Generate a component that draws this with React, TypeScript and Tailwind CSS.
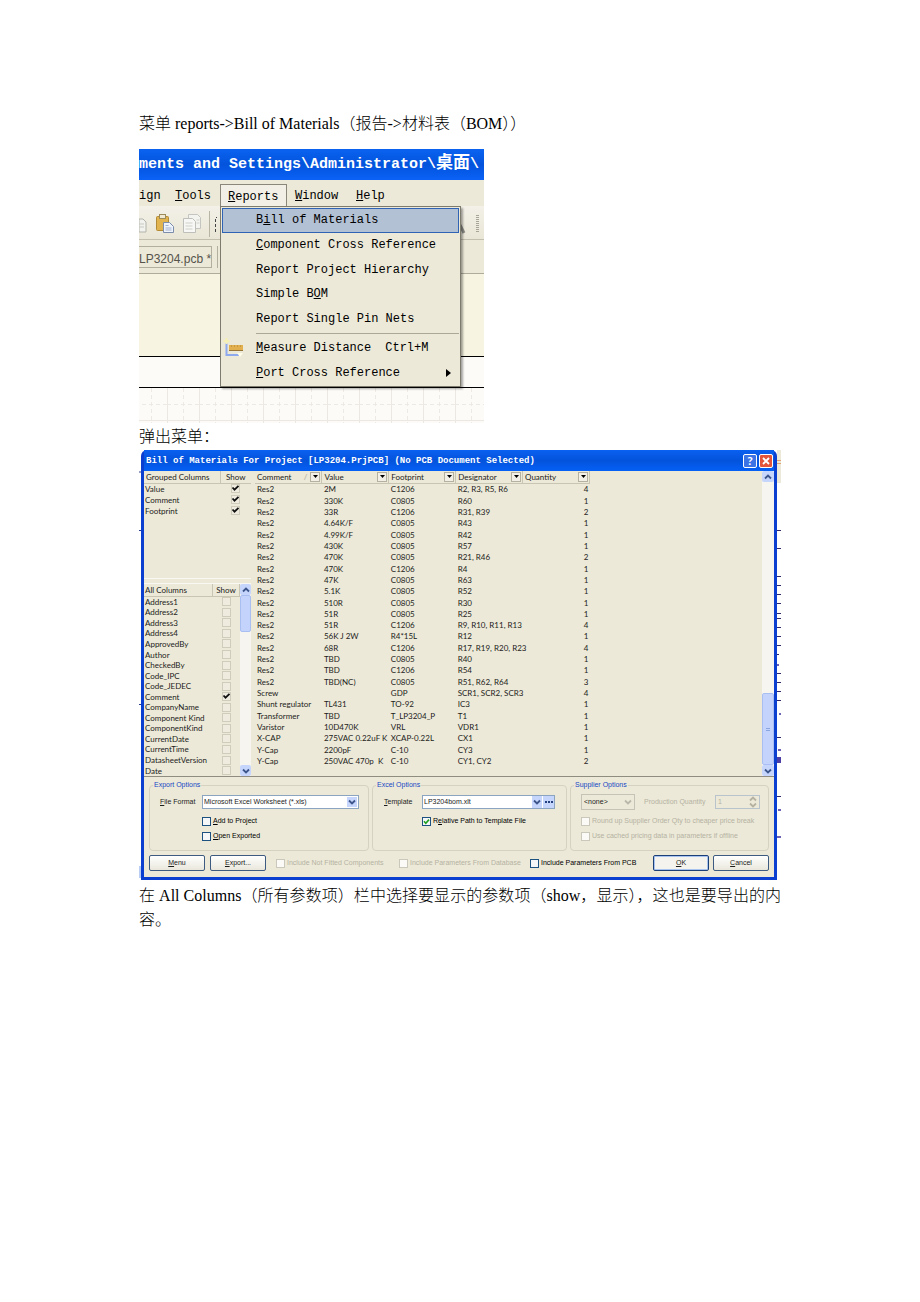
import { useState } from "react";
import type { ReactNode } from "react";

const rows = [
  ["Res2", "2M", "C1206", "R2, R3, R5, R6", 4],
  ["Res2", "330K", "C0805", "R60", 1],
  ["Res2", "33R", "C1206", "R31, R39", 2],
  ["Res2", "4.64K/F", "C0805", "R43", 1],
  ["Res2", "4.99K/F", "C0805", "R42", 1],
  ["Res2", "430K", "C0805", "R57", 1],
  ["Res2", "470K", "C0805", "R21, R46", 2],
  ["Res2", "470K", "C1206", "R4", 1],
  ["Res2", "47K", "C0805", "R63", 1],
  ["Res2", "5.1K", "C0805", "R52", 1],
  ["Res2", "510R", "C0805", "R30", 1],
  ["Res2", "51R", "C0805", "R25", 1],
  ["Res2", "51R", "C1206", "R9, R10, R11, R13", 4],
  ["Res2", "56K J 2W", "R4*15L", "R12", 1],
  ["Res2", "68R", "C1206", "R17, R19, R20, R23", 4],
  ["Res2", "TBD", "C0805", "R40", 1],
  ["Res2", "TBD", "C1206", "R54", 1],
  ["Res2", "TBD(NC)", "C0805", "R51, R62, R64", 3],
  ["Screw", "", "GDP", "SCR1, SCR2, SCR3", 4],
  ["Shunt regulator", "TL431", "TO-92", "IC3", 1],
  ["Transformer", "TBD", "T_LP3204_P", "T1", 1],
  ["Varistor", "10D470K", "VRL", "VDR1", 1],
  ["X-CAP", "275VAC 0.22uF K", "XCAP-0.22L", "CX1", 1],
  ["Y-Cap", "2200pF", "C-10", "CY3", 1],
  ["Y-Cap", "250VAC 470p  K", "C-10", "CY1, CY2", 2],
];

const headers = ["Comment", "Value", "Footprint", "Designator", "Quantity"];

const groupedColumns = ["Value", "Comment", "Footprint"];

const allColumns = [
  "Address1",
  "Address2",
  "Address3",
  "Address4",
  "ApprovedBy",
  "Author",
  "CheckedBy",
  "Code_IPC",
  "Code_JEDEC",
  "Comment",
  "CompanyName",
  "Component Kind",
  "ComponentKind",
  "CurrentDate",
  "CurrentTime",
  "DatasheetVersion",
  "Date",
];

// Label with the keyboard shortcut letter underlined
const Mnemonic = ({ text, at = 0 }: { text: string; at?: number }) => (
  <span className="whitespace-pre">
    {text.slice(0, at)}
    <u className="underline-offset-1">{text[at]}</u>
    {text.slice(at + 1)}
  </span>
);

const Chevron = ({ up = false }: { up?: boolean }) => (
  <svg viewBox="0 0 8 6" className="h-[6px] w-[8px]" aria-hidden="true">
    <path
      d={up ? "M1 4.5 4 1.5 7 4.5" : "M1 1.5 4 4.5 7 1.5"}
      fill="none"
      stroke="currentColor"
      strokeWidth="1.8"
    />
  </svg>
);

const Scrollbar = ({ thumb }: { thumb: ReactNode }) => (
  <div className="flex h-full flex-col bg-[#f6f5f0]">
    <button
      aria-label="Scroll up"
      className="flex h-[11px] shrink-0 items-center justify-center rounded-xs bg-[#c6d5fb] text-[#3c568c]"
    >
      <Chevron up />
    </button>
    <div className="flex min-h-0 flex-1 flex-col">{thumb}</div>
    <button
      aria-label="Scroll down"
      className="flex h-[11px] shrink-0 items-center justify-center rounded-xs bg-[#c6d5fb] text-[#3c568c]"
    >
      <Chevron />
    </button>
  </div>
);

const ListTick = ({ name, checked }: { name: string; checked: boolean }) => {
  const [on, setOn] = useState(checked);
  return (
    <span className="relative mx-auto block size-[9px]">
      <input
        type="checkbox"
        aria-label={name}
        checked={on}
        onChange={() => setOn(!on)}
        className="peer block size-[9px] appearance-none border border-[#cfccbb] bg-[#efecdf]"
      />
      <svg
        viewBox="0 0 9 9"
        className="pointer-events-none absolute inset-0 hidden size-[9px] peer-checked:block"
      >
        <path d="M1.5 3.5 3.5 5.7 7.5 1.8" fill="none" stroke="#111" strokeWidth="1.8" />
      </svg>
    </span>
  );
};

type OptionProps = {
  text: string;
  at?: number;
  checked?: boolean;
  disabled?: boolean;
};

const Option = ({ text, at, checked = false, disabled = false }: OptionProps) => {
  const [on, setOn] = useState(checked);
  return (
    <label
      className={
        disabled
          ? "flex items-center gap-[2px] whitespace-nowrap text-[#b5b2a2]"
          : "flex items-center gap-[2px] whitespace-nowrap text-black"
      }
    >
      <span className="relative block size-[9px]">
        <input
          type="checkbox"
          checked={on}
          disabled={disabled}
          onChange={() => setOn(!on)}
          className="peer block size-[9px] appearance-none border border-[#1c5180] bg-[#f4f6f8] disabled:border-[#cac8bb] disabled:bg-[#fbfaf6]"
        />
        <svg
          viewBox="0 0 9 9"
          className="pointer-events-none absolute inset-0 hidden size-[9px] peer-checked:block"
        >
          <path d="M2 4.2 3.8 6.2 7 2.6" fill="none" stroke="#21a121" strokeWidth="1.6" />
        </svg>
      </span>
      {at === undefined ? <span>{text}</span> : <Mnemonic text={text} at={at} />}
    </label>
  );
};

const PushButton = ({ text, at, primary = false }: { text: string; at: number; primary?: boolean }) => (
  <button
    className={
      primary
        ? "h-[16px] w-[56px] rounded-xs border border-[#1c3f78] bg-[#f4f3ee] leading-[12px] ring-1 ring-[#a9c3f0] ring-inset"
        : "h-[16px] w-[56px] rounded-xs border border-[#3d5a80] bg-linear-to-b from-white to-[#e9e7dc] leading-[12px]"
    }
  >
    <Mnemonic text={text} at={at} />
  </button>
);

const MenuItem = ({ text, at, shortcut, active, arrow, icon }: {
  text: string;
  at?: number;
  shortcut?: string;
  active?: boolean;
  arrow?: boolean;
  icon?: ReactNode;
}) => (
  <button
    role="menuitem"
    className={
      active
        ? "flex items-center border border-[#3163b5] bg-[#b3c1d4] pr-[7px] text-left"
        : "flex items-center border border-transparent pr-[7px] text-left"
    }
  >
    <span className="w-[33px]">{icon}</span>
    {at === undefined ? <span>{text}</span> : <Mnemonic text={text} at={at} />}
    {shortcut && <span className="ml-[14px]">{shortcut}</span>}
    {arrow && (
      <svg viewBox="0 0 5 8" className="ml-auto h-[8px] w-[5px]">
        <path d="M0 0 5 4 0 8z" fill="#000" />
      </svg>
    )}
  </button>
);

const RulerIcon = () => (
  <svg viewBox="0 0 22 20" className="h-[20px] w-[22px]">
    <path d="M3.500 5v12H16" fill="none" stroke="#8ea9ee" strokeWidth="2" />
    <path d="M3.500 0v6M.5 3h6" stroke="#f6efb4" strokeWidth="2" />
    <path d="M14 15h6l-3 4z" fill="#fffce8" />
    <rect x="6" y="7" width="14" height="5" fill="#e2b04f" />
    <path d="M6 12.500h14" stroke="#967436" />
    <path d="M8.500 7v2M11.500 7v2M14.500 7v2M17.500 7v2" stroke="#c79a42" />
  </svg>
);

const ToolbarIcons = () => (
  <svg viewBox="0 0 78 32" className="h-[32px] w-[78px]">
    <path d="M0 12h4l3 3v10H0z" fill="#f2f2ee" stroke="#b3b3ab" />
    <path d="M0 17h5M0 20h5" stroke="#c9c9c2" />
    {/* paste */}
    <rect x="17.500" y="9.500" width="12" height="14" rx="1" fill="#e1b450" stroke="#b38a35" />
    <rect x="20.500" y="7.500" width="6" height="4" fill="#efe9d2" stroke="#9c8a5a" />
    <path d="M24.500 15.500h6l4 4v6h-10z" fill="#eef3fc" stroke="#7c8dab" />
    <path d="M26.500 18.500h3M26.500 21h6M26.500 23h6" stroke="#a5b3cf" />
    {/* duplicate */}
    <path d="M49.500 7.500h9l3 3v11h-12z" fill="#f3f3f0" stroke="#c4c4c0" />
    <path d="M44.500 11.500h9l3 3v11h-12z" fill="#f7f7f5" stroke="#bebeba" />
    <path d="M46.500 16h7M46.500 19h7M46.500 22h7M57.500 13h3M57.500 16h3" stroke="#cfcfcb" />
    <path d="M70.500 4v26" stroke="#b7b4a4" />
    <path d="M80 10.500h-3.500v15H80" fill="none" stroke="#444" strokeDasharray="3 2" />
  </svg>
);

const ReportsMenu = () => (
  <section className="relative h-[274px] w-[345px] overflow-hidden bg-[#fdfbf7] font-['Liberation_Mono','Noto_Sans_CJK_SC',monospace] text-[12px] text-black">
    <div className="flex h-[31px] items-center bg-linear-to-b from-[#0a63f0] via-[#0453dc] to-[#0a62f6] text-[15px] font-bold whitespace-nowrap text-white">
      <span>
        ments and Settings\Administrator\<span className="text-[17px]">桌面</span>\
      </span>
    </div>
    <nav className="flex h-[26px] items-end bg-[#ece9d8]">
      <button className="h-[22px] w-[27px] text-left">ign</button>
      <button className="h-[22px] w-[54px] pl-[9px] text-left"><Mnemonic text="Tools" /></button>
      <button className="h-[22px] w-[67px] border border-b-0 border-[#8a867a] bg-[#f2f0e6] pl-[7px] text-left">
        <Mnemonic text="Reports" />
      </button>
      <button className="h-[22px] w-[61px] pl-[8px] text-left"><Mnemonic text="Window" /></button>
      <button className="h-[22px] w-[60px] pl-[8px] text-left"><Mnemonic text="Help" /></button>
    </nav>
    <div className="flex h-[34px] items-center justify-between border-b border-[#c3bfae] bg-linear-to-b from-[#f3f1e8] to-[#e9e6d6]">
      <ToolbarIcons />
      <svg viewBox="0 0 24 32" className="h-[32px] w-[24px]">
        <path d="M0 18l4 8" stroke="#8b8b86" strokeWidth="3" />
        <path d="M17.500 8v18" stroke="#a7a498" strokeWidth="3" strokeDasharray="1 1" />
      </svg>
    </div>
    <div className="flex h-[34px] items-center gap-[5px] border-b border-[#b0ac9b] bg-[#ece9d8]">
      <button className="h-[22px] w-[73px] shrink-0 border border-l-0 border-[#b3af9e] text-left font-['Liberation_Sans',sans-serif] text-[12px] whitespace-nowrap text-[#55534b]">
        LP3204.pcb *
      </button>
      <span className="h-[22px] flex-1 border-l border-[#b3af9e]" />
    </div>
    <div className="h-[82px] bg-[#f7f4e1]" />
    <div className="h-[32px] border-y border-black bg-[#fdfbf7]" />
    <svg className="h-[35px] w-full" aria-hidden="true">
      <defs>
        <pattern id="sheetGrid" width="32" height="34" patternUnits="userSpaceOnUse" x="-4">
          <path d="M0.500 0v34M0 32.500h32" stroke="#ebe7e2" />
          <path d="M16.500 0v34M0 16.500h32" stroke="#ede9e4" strokeDasharray="4 3" />
        </pattern>
      </defs>
      <rect width="100%" height="35" fill="url(#sheetGrid)" />
    </svg>

    <div
      role="menu"
      className="absolute top-[57px] left-[81px] w-[241px] border border-[#7d7a6e] bg-[#ece9d8] p-[1px] shadow-[2px_2px_2px_rgba(0,0,0,0.35)]"
    >
      <div className="grid h-[123px] auto-rows-fr">
        <MenuItem text="Bill of Materials" at={1} active />
        <MenuItem text="Component Cross Reference" at={0} />
        <MenuItem text="Report Project Hierarchy" />
        <MenuItem text="Simple BOM" at={8} />
        <MenuItem text="Report Single Pin Nets" />
      </div>
      <hr className="my-[2px] ml-[34px] border-[#aca899]" />
      <div className="grid h-[49px] auto-rows-fr">
        <MenuItem text="Measure Distance" at={0} shortcut="Ctrl+M" icon={<RulerIcon />} />
        <MenuItem text="Port Cross Reference" at={0} arrow />
      </div>
    </div>
  </section>
);

const ColumnLists = () => (
  <div className="flex w-[107px] shrink-0 flex-col">
    <div className="h-[108px] border-b border-[#f9f8f3]">
      <table className="w-full table-fixed border-collapse">
        <thead>
          <tr className="h-[12px]">
            <th className="border-b border-[#c9c5b3] p-0 pl-[2px] text-left font-normal">Grouped Columns</th>
            <th className="w-[31px] border-b border-l border-[#c9c5b3] p-0 text-center font-normal">Show</th>
          </tr>
        </thead>
        <tbody>
          {groupedColumns.map((name) => (
            <tr key={name} className="h-[11px]">
              <td className="p-0 pl-[1px]">{name}</td>
              <td className="p-0"><ListTick name={name} checked /></td>
            </tr>
          ))}
        </tbody>
      </table>
    </div>
    <div className="mt-[4px] flex min-h-0 flex-1 border-t border-[#f9f8f3]">
      <div className="h-[192px] min-w-0 flex-1 overflow-hidden">
        <table className="h-[192px] w-full table-fixed border-collapse">
          <thead>
            <tr className="h-[12px]">
              <th className="border-b border-[#c9c5b3] p-0 pl-[1px] text-left font-normal">All Columns</th>
              <th className="w-[27px] border-x border-b border-[#c9c5b3] p-0 text-center font-normal">Show</th>
            </tr>
          </thead>
          <tbody>
            {allColumns.map((name) => (
              <tr key={name}>
                <td className="p-0 pl-[1px]">{name}</td>
                <td className="p-0"><ListTick name={name} checked={name === "Comment"} /></td>
              </tr>
            ))}
          </tbody>
        </table>
      </div>
      <div className="w-[11px]">
        <Scrollbar
          thumb={<div className="h-[37px] rounded-xs border border-[#a9bff2] bg-[#c4d3fb]" />}
        />
      </div>
    </div>
  </div>
);

const BomTable = () => (
  <div className="flex min-w-0 flex-1">
    <div className="min-w-0 flex-1">
      <table className="h-[296px] w-[335px] table-fixed border-collapse">
        <thead>
          <tr className="h-[12px]">
            {headers.map((name) => (
              <th key={name} className="border-r border-b border-[#c9c5b3] p-0 font-normal">
                <div className="flex items-center justify-between pr-[1px] pl-[2px]">
                  {name}
                  {name === "Comment" && <span className="ml-auto pr-[3px] text-[#aca899]">/</span>}
                  <button
                    aria-label={"Filter " + name}
                    className="flex size-[10px] items-center justify-center border border-[#b5b1a0] bg-[#f1efe6]"
                  >
                    <svg viewBox="0 0 5 3" className="h-[3px] w-[5px]">
                      <path d="M0 0h5L2.500 3z" fill="#000" />
                    </svg>
                  </button>
                </div>
              </th>
            ))}
          </tr>
        </thead>
        <tbody>
          {rows.map((row, i) => (
            <tr key={i}>
              {row.map((cell, j) => (
                <td
                  key={j}
                  className={
                    j === 4
                      ? "p-0 pr-[1px] text-right"
                      : "p-0 pl-[2px] whitespace-pre"
                  }
                >
                  {cell}
                </td>
              ))}
            </tr>
          ))}
        </tbody>
      </table>
    </div>
    <div className="w-[12px]">
      <Scrollbar
        thumb={
          <div className="mt-auto flex h-[72px] flex-col items-center justify-center gap-[1px] rounded-xs border border-[#a9bff2] bg-[#c4d3fb]">
            <span className="h-px w-[4px] bg-[#8ba5e0]" />
            <span className="h-px w-[4px] bg-[#8ba5e0]" />
          </div>
        }
      />
    </div>
  </div>
);

const Group = ({ title, className, children }: { title: string; className: string; children: ReactNode }) => (
  <fieldset className={className}>
    <legend className="ml-[3px] px-[1px] leading-[8px] text-[#1747c4]">{title}</legend>
    {children}
  </fieldset>
);

const ExportForm = () => (
  <form
    className="border-t border-[#8f8c80] px-[5px] pt-[4px] pb-[6px] font-['Liberation_Sans',sans-serif] text-[7px] leading-[10px]"
    onSubmit={(e) => e.preventDefault()}
  >
    <div className="flex gap-[3px]">
      <Group title="Export Options" className="h-[70px] w-[220px] rounded-sm border border-[#d5d2c2]">
        <div className="mt-[6px] flex items-center">
          <label htmlFor="fileFormat" className="w-[52px] pl-[10px] whitespace-nowrap"><Mnemonic text="File Format" /></label>
          <div className="flex h-[14px] w-[157px] items-center border border-[#8ba4bf] bg-white pr-[1px]">
            <select id="fileFormat" className="min-w-0 flex-1 appearance-none pl-[1px] leading-[10px]">
              <option>Microsoft Excel Worksheet (*.xls)</option>
            </select>
            <span className="flex h-[10px] w-[10px] items-center justify-center bg-[#c6d5fb] text-[#3c568c]"><Chevron /></span>
          </div>
        </div>
        <div className="mt-[7px] ml-[52px] flex flex-col gap-[5px]">
          <Option text="Add to Project" at={0} />
          <Option text="Open Exported" at={0} />
        </div>
      </Group>
      <Group title="Excel Options" className="h-[70px] w-[195px] rounded-sm border border-[#d5d2c2]">
        <div className="mt-[6px] flex items-center">
          <label htmlFor="template" className="w-[49px] pl-[11px]"><Mnemonic text="Template" /></label>
          <div className="flex h-[14px] w-[133px] items-center gap-[1px] border border-[#8ba4bf] bg-white">
            <select id="template" className="min-w-0 flex-1 appearance-none pl-[1px] leading-[10px]">
              <option>LP3204bom.xlt</option>
            </select>
            <span className="flex h-[12px] w-[10px] items-center justify-center bg-[#c6d5fb] text-[#3c568c]"><Chevron /></span>
            <button type="button" aria-label="Browse" className="flex h-[12px] w-[11px] items-center justify-center gap-[1px] bg-[#c6d5fb]">
              <i className="size-[2px] bg-[#24407c]" />
              <i className="size-[2px] bg-[#24407c]" />
              <i className="size-[2px] bg-[#24407c]" />
            </button>
          </div>
        </div>
        <div className="mt-[7px] ml-[49px]">
          <Option text="Relative Path to Template File" at={1} checked />
        </div>
      </Group>
      <Group title="Supplier Options" className="h-[70px] min-w-0 flex-1 rounded-sm border border-[#d5d2c2]">
        <div className="mt-[5px] ml-[10px] flex items-center">
          <div className="flex h-[16px] w-[54px] items-center border border-[#c5c3b6] pr-[1px]">
            <select aria-label="Supplier" className="min-w-0 flex-1 appearance-none pl-[2px] leading-[10px]">
              <option>&lt;none&gt;</option>
            </select>
            <span className="flex h-[12px] w-[10px] items-center justify-center text-[#b9b7aa]"><Chevron /></span>
          </div>
          <label htmlFor="quantity" className="ml-[9px] w-[71px] whitespace-nowrap text-[#b5b2a2]">Production Quantity</label>
          <div className="flex h-[14px] w-[45px] items-center border border-[#b9c3cc] pr-[2px] text-[#b5b2a2]">
            <input id="quantity" defaultValue="1" disabled className="min-w-0 flex-1 pl-[2px]" />
            <span className="flex flex-col"><Chevron up /><Chevron /></span>
          </div>
        </div>
        <div className="mt-[6px] ml-[10px] flex flex-col gap-[5px]">
          <Option text="Round up Supplier Order Qty to cheaper price break" disabled />
          <Option text="Use cached pricing data in parameters if offline" disabled />
        </div>
      </Group>
    </div>
    <div className="mt-[4px] flex items-center">
      <PushButton text="Menu" at={0} />
      <span className="ml-[5px]"><PushButton text="Export..." at={0} /></span>
      <div className="ml-[10px] w-[123px]"><Option text="Include Not Fitted Components" disabled /></div>
      <div className="w-[131px]"><Option text="Include Parameters From Database" disabled /></div>
      <Option text="Include Parameters From PCB" />
      <div className="ml-auto flex gap-[4px]">
        <PushButton text="OK" at={0} primary />
        <PushButton text="Cancel" at={0} />
      </div>
    </div>
  </form>
);

const BomDialog = () => (
  <section className="flex">
    <svg viewBox="0 0 2 430" className="h-[430px] w-[2px] shrink-0">
      <path d="M0 22h2M0 80.500h2M0 254.500h2" stroke="#2b3a8c" />
      <path d="M0 416h2v12H0z" fill="#b9cdf5" />
    </svg>
    <div
      role="dialog"
      className="min-w-0 flex-1 rounded-t-md border-x-3 border-b-3 border-[#0a3fcf] bg-[#ece9d8] font-['Lato','Noto_Sans_CJK_SC',sans-serif] text-[8px] leading-[10px] text-[#1c1c1a]"
    >
      <header className="flex h-[21px] items-center bg-linear-to-b from-[#0a60f0] via-[#0453dc] to-[#0560f5] pr-[1px] pl-[2px] text-white">
        <h1 className="font-['Liberation_Mono',monospace] text-[9px] font-bold whitespace-nowrap">
          Bill of Materials For Project [LP3204.PrjPCB] (No PCB Document Selected)
        </h1>
        <button aria-label="Help" className="ml-auto size-[14px] rounded-xs border border-white bg-[#3c74e6] text-[12px] leading-[12px] font-bold">?</button>
        <button aria-label="Close" className="ml-[2px] flex size-[14px] items-center justify-center rounded-xs border border-white bg-[#e2553a]">
          <svg viewBox="0 0 8 8" className="size-[8px]">
            <path d="M1 1l6 6M7 1l-6 6" stroke="#fff" strokeWidth="1.8" />
          </svg>
        </button>
      </header>
      <div className="flex h-[305px] gap-[4px]">
        <ColumnLists />
        <BomTable />
      </div>
      <ExportForm />
    </div>
    {/* slice of the schematic window behind the dialog */}
    <svg viewBox="0 0 4 430" className="h-[430px] w-[4px] shrink-0">
      <path d="M0 0h4v33H0z" fill="#ece9d8" />
      <path d="M0 10.500h4M0 13.500h4" stroke="#e3a071" />
      <path
        d="M0 80.500h4M0 98.500h4M0 126.500h4M0 135.500h4M0 144.500h4M0 153.500h4M0 163.500h4M0 168.500h4M0 177.500h4M0 186.500h4M0 195.500h4M0 204.500h2M0 223.500h4M0 232.500h4M0 241.500h4M0 250.500h4M0 287.500h4M0 346.500h4"
        stroke="#2e2a6a"
      />
      <path d="M0 215h2M2 264h2M1 300h3M0 387h4M1 360h3" stroke="#6c63b5" strokeWidth="2" />
      <path d="M0 307h4v6H0z" fill="#4b3fa6" />
    </svg>
  </section>
);

const App = () => {
  return (
    <main className="min-h-screen bg-white px-[139px] pt-[112px] font-['Liberation_Serif','Noto_Sans_CJK_SC',serif] text-[16px] leading-[24px] text-black">
      <p className="font-light">菜单 reports-&gt;Bill of Materials（报告-&gt;材料表（BOM））</p>
      <div className="mt-[13px]">
        <ReportsMenu />
      </div>
      <p className="leading-[27px] font-light">弹出菜单：</p>
      <BomDialog />
      <p className="mt-[4px] text-justify font-light">
        在 All Columns（所有参数项）栏中选择要显示的参数项（show，显示），这也是要导出的内容。
      </p>
    </main>
  );
};

export default App;
